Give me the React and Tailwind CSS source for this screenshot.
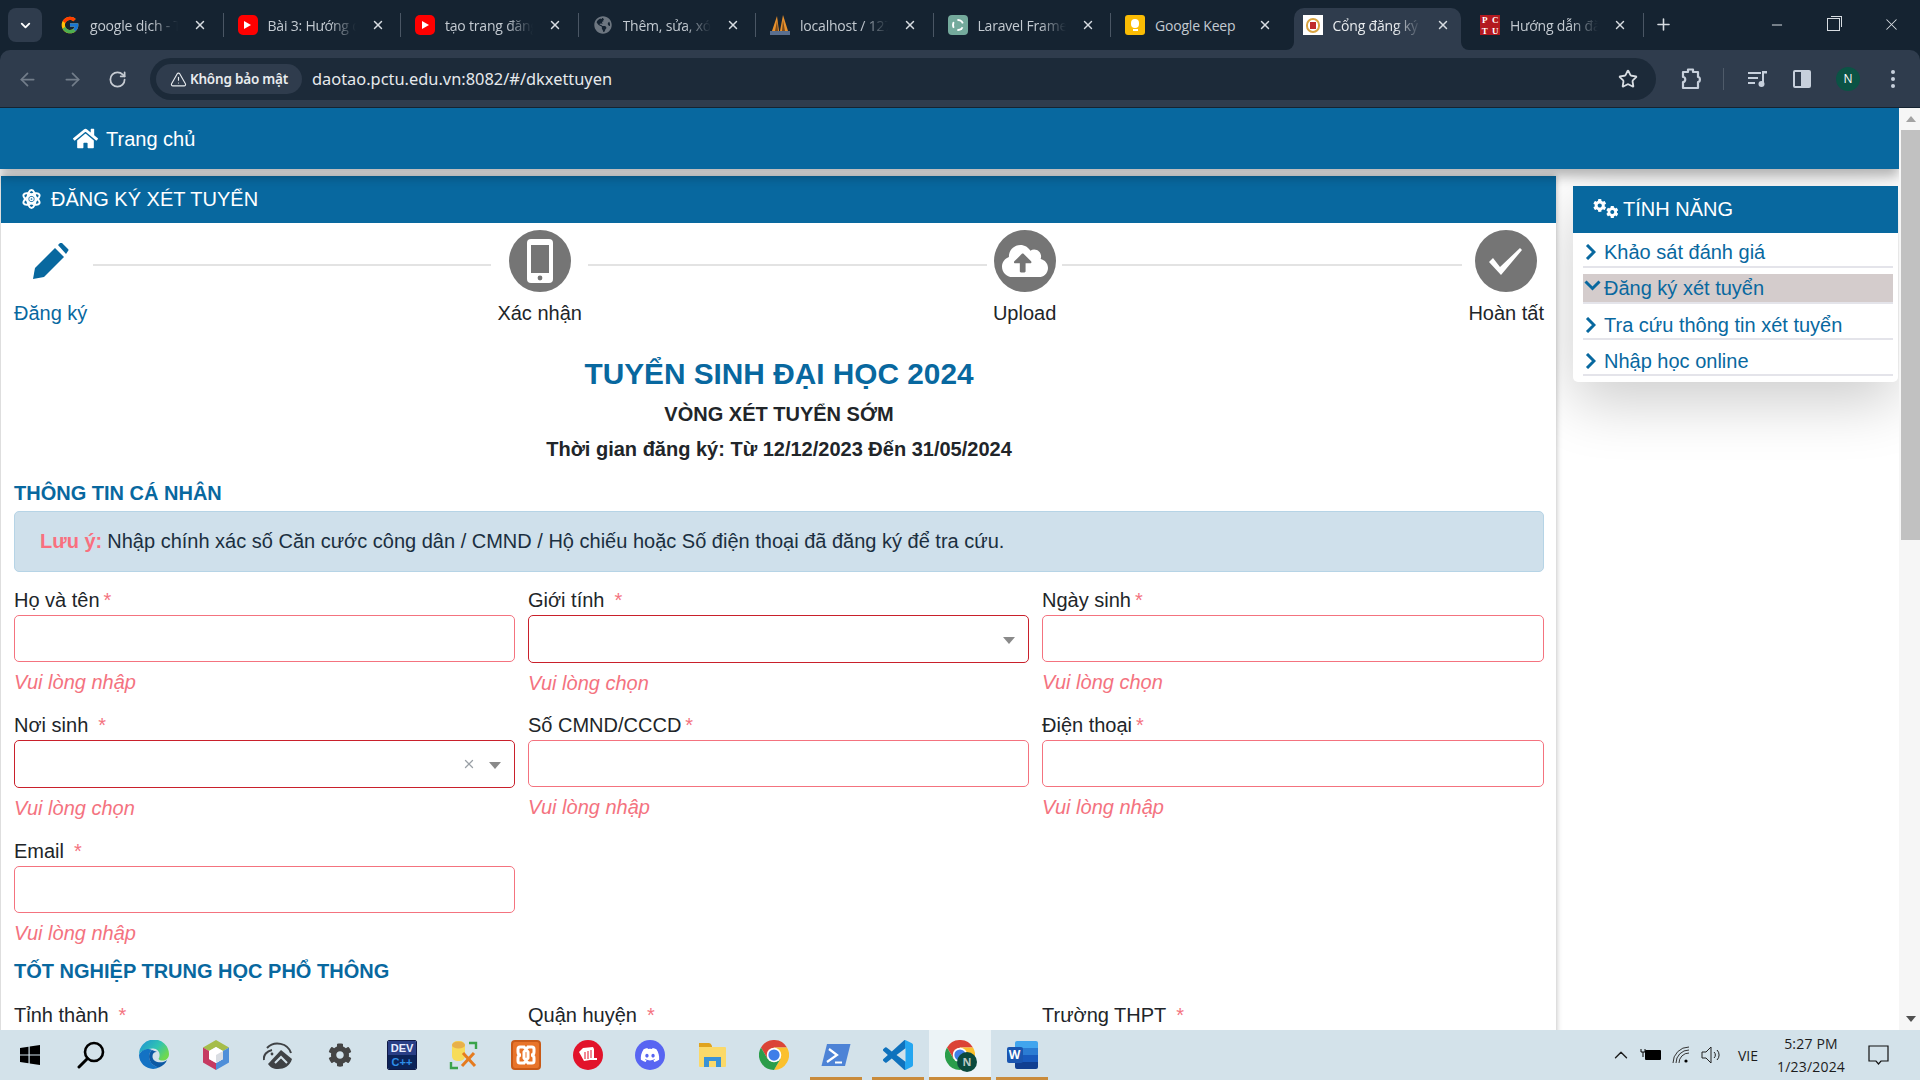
import React from 'react';
import { ChevronDown, ChevronUp, ArrowLeft, ArrowRight, RotateCw, Star, Plus, X, Minus, TriangleAlert } from 'lucide-react';
import { FaHome, FaCog, FaCloudUploadAlt, FaDiscord, FaGlobeAmericas } from 'react-icons/fa';
import { FcGoogle } from 'react-icons/fc';

const ChromeLogo = ({ size = 20 }) => (
  <svg width={size} height={size} viewBox="0 0 24 24">
    <path d="M1.6 6 A12 12 0 0 1 22.4 6 H12 L6.8 15 Z" fill="#db4437" />
    <path d="M22.4 6 A12 12 0 0 1 12 24 L17.2 15 L12 6 Z" fill="#fbc02d" />
    <path d="M12 24 A12 12 0 0 1 1.6 6 L6.8 15 L17.2 15 Z" fill="#2a9d4a" />
    <circle cx="12" cy="12" r="5.8" fill="#fff" />
    <circle cx="12" cy="12" r="4.5" fill="#3f7fe8" />
  </svg>
);

const YoutubeIcon = () => (
  <div className="w-[20px] h-[20px] rounded-[5px] bg-[#f00] flex items-center justify-center">
    <div className="w-0 h-0 border-y-[4px] border-y-transparent border-l-[7px] border-l-white" />
  </div>
);

const PmaIcon = () => (
  <svg width="20" height="22" viewBox="0 0 20 22">
    <path d="M2 17 L7 2 L9 17 Z" fill="#e8912d" />
    <path d="M10 17 L13 1 L18 17 Z" fill="#e8912d" />
    <path d="M5 17 L7 7 L8 17 Z M12 17 L13 6 L15 17 Z" fill="#7a4a1a" />
    <rect x="0" y="17" width="20" height="4" fill="#5a6f8f" />
  </svg>
);

const GptIcon = () => (
  <div className="w-[20px] h-[20px] rounded-[4px] bg-[#74aa9c] flex items-center justify-center">
    <div className="w-[12px] h-[12px] rounded-full border-2 border-dashed border-white" />
  </div>
);

const KeepIcon = () => (
  <div className="w-[20px] h-[20px] rounded-[3px] bg-[#fbbc04] flex flex-col items-center justify-center gap-[1px]">
    <div className="w-[8px] h-[9px] rounded-full bg-white" />
    <div className="w-[5px] h-[2px] bg-white" />
  </div>
);

const SchoolIcon = () => (
  <div className="w-[20px] h-[20px] bg-white flex items-center justify-center">
    <div className="w-[14px] h-[15px] rounded-full border-2 border-[#d9a441] flex items-center justify-center">
      <div className="w-[6px] h-[7px] bg-[#c02a2a]" />
    </div>
  </div>
);

const PctuIcon = () => (
  <div className="w-[20px] h-[20px] bg-[#b3191f] grid grid-cols-2 gap-px text-white text-[9px] leading-[10px] font-bold text-center font-['Liberation_Serif',serif]">
    <span>P</span><span>C</span><span>T</span><span>U</span>
  </div>
);

const tabs = [
  { title: 'google dịch - Tìm', icon: <FcGoogle size={20} /> },
  { title: 'Bài 3: Hướng dẫn', icon: <YoutubeIcon /> },
  { title: 'tạo trang đăng ký', icon: <YoutubeIcon /> },
  { title: 'Thêm, sửa, xóa dữ', icon: <FaGlobeAmericas size={18} className="text-[#6d7680]" /> },
  { title: 'localhost / 127.0', icon: <PmaIcon /> },
  { title: 'Laravel Framework', icon: <GptIcon /> },
  { title: 'Google Keep', icon: <KeepIcon />, noFade: true },
  { title: 'Cổng đăng ký xét', icon: <SchoolIcon />, active: true },
  { title: 'Hướng dẫn đăng', icon: <PctuIcon /> },
];

const Tab = ({ tab, showSep }) => (
  <div className="relative w-[177.5px] h-[42px] shrink-0 flex items-center pb-[8px]">
    {tab.active && (
      <>
        <div className="absolute inset-y-0 left-[5px] right-[5px] bg-[#2f3c4d] rounded-t-[10px]" />
        <div className="absolute bottom-0 left-[-3px] w-[8px] h-[8px] bg-[#2f3c4d]">
          <div className="w-full h-full bg-[#152331] rounded-br-[8px]" />
        </div>
        <div className="absolute bottom-0 right-[-3px] w-[8px] h-[8px] bg-[#2f3c4d]">
          <div className="w-full h-full bg-[#152331] rounded-bl-[8px]" />
        </div>
      </>
    )}
    <div className="relative w-[20px] ml-[14px] flex justify-center shrink-0">{tab.icon}</div>
    <div
      className={`relative ml-[10px] w-[88px] whitespace-nowrap overflow-hidden text-[14px] tracking-[-0.2px] ${
        tab.active ? 'text-[#e8ebee]' : 'text-[#c3cad1]'
      } ${tab.noFade ? '' : '[mask-image:linear-gradient(to_right,black_70%,transparent_100%)]'}`}
    >
      {tab.title}
    </div>
    <X size={14} strokeWidth={2.5} className="relative ml-[15px] text-[#d7dce1] shrink-0" />
    {showSep && <div className="absolute right-0 top-[5px] h-[24px] w-px bg-[#4a5664]" />}
  </div>
);

const ChromeBar = () => (
  <div className="h-[108px] shrink-0 bg-[#152331] font-['Open_Sans',sans-serif]">
    <div className="h-[50px] flex items-end relative">
      <div className="absolute left-[8px] top-[8px] w-[34px] h-[34px] rounded-[8px] bg-[#2f3c4d] flex items-center justify-center">
        <ChevronDown size={15} strokeWidth={3} className="text-white" />
      </div>
      <div className="flex pl-[46px]">
        {tabs.map((t, i) => (
          <Tab key={i} tab={t} showSep={i !== 6 && i !== 7} />
        ))}
      </div>
      <Plus size={19} strokeWidth={2} className="ml-[10px] mb-[16px] text-[#d7dce1]" />
      <div className="ml-auto flex items-center mb-[16px] text-[#d7dce1]">
        <Minus size={16} strokeWidth={1.5} className="mr-[42px]" />
        <div className="relative w-[13px] h-[13px] border border-[#d7dce1] mr-[42px]">
          <div className="absolute -top-[3px] -right-[3px] w-[11px] h-[11px] border-t border-r border-[#d7dce1]" />
        </div>
        <X size={19} strokeWidth={1.3} className="mr-[19px]" />
      </div>
    </div>
    <div className="h-[57px] bg-[#2f3c4d] rounded-t-[10px] flex items-center pl-[5px] pt-px">
      <ArrowLeft size={21} className="w-[45px] text-[#727d8a]" />
      <ArrowRight size={21} className="w-[45px] text-[#727d8a]" />
      <RotateCw size={19} strokeWidth={2.2} className="w-[45px] text-[#c7ccd3]" />
      <div className="ml-[10px] w-[1506px] h-[42px] rounded-full bg-[#1c2a39] flex items-center pl-[6px] pr-[18px]">
        <div className="w-[146px] h-[30px] rounded-full bg-[#2f3c4d] flex items-center justify-center gap-[3px] text-[#e8ebee]">
          <TriangleAlert size={17} strokeWidth={1.6} />
          <span className="text-[13.5px] font-semibold whitespace-nowrap tracking-[-0.2px] font-['Noto_Sans',sans-serif]">Không bảo mật</span>
        </div>
        <span className="ml-[10px] text-[16.4px] text-[#e6e9ec] font-['Noto_Sans',sans-serif]">daotao.pctu.edu.vn:8082/#/dkxettuyen</span>
        <Star size={20} strokeWidth={2.2} className="ml-auto text-[#d7dce1]" />
      </div>
      <svg width="22" height="24" viewBox="0 0 22 24" className="ml-[24px] text-[#c7d0dc]" fill="none" stroke="currentColor" strokeWidth="2.2">
        <path d="M3 5 H8 V2.5 H13 V5 H18 V10 C20.5 10 20.5 15 18 15 V21 H3 V15 C6 15 6 10 3 10 Z" strokeLinejoin="round" />
      </svg>
      <div className="ml-[21px] w-px h-[22px] bg-[#4f5b6a]" />
      <svg width="20" height="18" viewBox="0 0 20 18" className="ml-[24px] text-[#c7d0dc]" fill="currentColor">
        <rect x="0" y="2" width="13" height="2" />
        <rect x="0" y="7" width="10" height="2" />
        <rect x="0" y="12" width="7" height="2" />
        <rect x="14" y="2" width="2" height="12" />
        <rect x="14" y="1" width="5" height="2.5" />
        <circle cx="13.5" cy="14" r="3" />
      </svg>
      <div className="ml-[25px] w-[18px] h-[18px] border-2 border-[#c7d0dc] rounded-[2px] flex justify-end">
        <div className="w-[8px] h-full bg-[#c7d0dc]" />
      </div>
      <div className="ml-[25px] w-[24px] h-[24px] rounded-full bg-[#0b5345] flex items-center justify-center text-[12px] text-white">N</div>
      <div className="ml-[31px] flex flex-col gap-[3px]">
        <div className="w-[4px] h-[4px] rounded-full bg-[#c7d0dc]" />
        <div className="w-[4px] h-[4px] rounded-full bg-[#c7d0dc]" />
        <div className="w-[4px] h-[4px] rounded-full bg-[#c7d0dc]" />
      </div>
    </div>
  </div>
);

const PencilIcon = () => (
  <svg width="36" height="36" viewBox="0 0 36 36" fill="#08689f">
    <path d="M0 36 L2 25 L22 5 L31 14 L11 34 Z" />
    <path d="M25 2 L27 0 Q28 -0.5 29 0 L35 6 Q36 7 35 8 L33 11 Z" />
  </svg>
);

const PhoneIcon = () => (
  <svg width="26" height="44" viewBox="0 0 26 44">
    <rect x="0" y="0" width="26" height="44" rx="4" fill="#fff" />
    <rect x="4" y="6" width="18" height="28" fill="#757575" />
    <circle cx="13" cy="39" r="2.4" fill="#757575" />
  </svg>
);

const CheckIcon = () => (
  <svg width="34" height="27" viewBox="0 0 34 27" fill="#fff">
    <path d="M0 14 L4 10 L11 19 L31 0 L33 2 L12 27 Z" />
  </svg>
);

const AtomIcon = () => (
  <svg width="19" height="20" viewBox="0 0 19 20" fill="none" stroke="#fff" strokeWidth="2">
    <ellipse cx="9.5" cy="10" rx="4" ry="9" />
    <ellipse cx="9.5" cy="10" rx="4" ry="9" transform="rotate(60 9.5 10)" />
    <ellipse cx="9.5" cy="10" rx="4" ry="9" transform="rotate(120 9.5 10)" />
    <circle cx="9.5" cy="10" r="1.6" strokeWidth="1.5" />
  </svg>
);

const StepCircle = ({ children }) => (
  <div className="w-[62px] h-[62px] rounded-full bg-[#757575] flex items-center justify-center">{children}</div>
);

const Step = ({ label, active, children }) => (
  <div className="flex flex-col items-center shrink-0">
    <div className="h-[62px] flex items-center justify-center">{children}</div>
    <div className={`mt-[8px] h-[26px] leading-[26px] text-[20px] whitespace-nowrap ${active ? 'text-[#08689f]' : 'text-[#212529]'}`}>{label}</div>
  </div>
);

const Field = ({ label, star = 'ml-[4px]', kind = 'input', error, labelCls = 'h-[28px]' }) => (
  <div>
    <div className={`${labelCls} leading-[26px] text-[20px] text-[#212529] whitespace-nowrap`}>
      {label}
      <span className={`${star} text-[#f4737f]`}>*</span>
    </div>
    {kind === 'input' ? (
      <div className="h-[47px] rounded-[5px] border border-[#f4737f] bg-white" />
    ) : (
      <div className="h-[48px] rounded-[5px] border-[1.5px] border-[#c9202b] bg-white flex items-center justify-end pr-[13px] gap-[13px]">
        {kind === 'clearable' && <X size={14} strokeWidth={2.2} className="text-[#9aa0a6]" />}
        <div className="w-0 h-0 mt-[2px] border-x-[6px] border-x-transparent border-t-[7px] border-t-[#8a8a8a]" />
      </div>
    )}
    <div className="mt-[7px] h-[26px] leading-[26px] text-[20px] italic text-[#f4737f]">{error}</div>
  </div>
);

const features = [
  { label: 'Khảo sát đánh giá', cls: 'h-[35px] pt-[4px]' },
  { label: 'Đăng ký xét tuyển', open: true, cls: 'h-[30px] mt-[6px] bg-[#d4cccc]' },
  { label: 'Tra cứu thông tin xét tuyển', cls: 'h-[36px] pt-[7px]' },
  { label: 'Nhập học online', cls: 'h-[36px] pt-[7px]' },
];

const Sidebar = () => (
  <div className="ml-[17px] mt-[10px] w-[325px] h-[196px] rounded-b-[5px] bg-white shadow-[0_20px_60px_rgba(0,0,0,0.2)]">
    <div className="h-[47px] bg-[#08689f] flex items-center pl-[20px] pb-[2px] text-white">
      <div className="w-[26px] h-[21px] flex justify-between">
        <FaCog size={15} className="self-start" />
        <FaCog size={14} className="self-end" />
      </div>
      <span className="ml-[4px] text-[20px]">TÍNH NĂNG</span>
    </div>
    <div className="pl-[10px] pr-[5px] text-[#08689f]">
      {features.map((f) => (
        <div key={f.label} className={`flex items-center text-[20px] border-b-2 border-[#e4e4ea] ${f.cls}`}>
          <div className="w-[21px] shrink-0 pl-[1px]">
            {f.open ? (
              <svg width="17" height="11" viewBox="0 0 17 11" fill="none" stroke="#08689f" strokeWidth="3" className="-mt-[5px]">
                <path d="M1.5 1.5 L8.5 8.5 L15.5 1.5" />
              </svg>
            ) : (
              <svg width="11" height="16" viewBox="0 0 11 16" fill="none" stroke="#08689f" strokeWidth="3" className="ml-[1px]">
                <path d="M2 1 L9 8 L2 15" />
              </svg>
            )}
          </div>
          {f.label}
        </div>
      ))}
    </div>
  </div>
);

const SectionTitle = ({ children, className }) => (
  <div className={`text-[20px] font-bold text-[#08689f] whitespace-nowrap ${className}`}>{children}</div>
);

const RegisterCard = () => (
  <div className="relative ml-[1px] w-[1555px] shrink-0 h-[900px] bg-white shadow-[0_0_6px_rgba(0,0,0,0.3)]">
    <div className="h-[47px] bg-[#08689f] flex items-center pl-[21px] pb-[2px] text-white">
      <AtomIcon />
      <span className="ml-[10px] text-[20px]">ĐĂNG KÝ XÉT TUYỂN</span>
    </div>
    <div className="pl-[13px] pr-[12px]">
      <div className="flex gap-[6px] pt-[7px]">
        <Step label="Đăng ký" active><PencilIcon /></Step>
        <div className="w-[398px] shrink-0 h-[2px] mt-[34px] bg-[#e3e3e3]" />
        <Step label="Xác nhận"><StepCircle><PhoneIcon /></StepCircle></Step>
        <div className="w-[399px] shrink-0 h-[2px] mt-[34px] bg-[#e3e3e3]" />
        <Step label="Upload"><StepCircle><FaCloudUploadAlt size={46} className="text-white" /></StepCircle></Step>
        <div className="flex-1 h-[2px] mt-[34px] bg-[#e3e3e3]" />
        <Step label="Hoàn tất"><StepCircle><CheckIcon /></StepCircle></Step>
      </div>
      <div className="text-center mt-[28px]">
        <div className="h-[40px] leading-[40px] text-[29.8px] font-bold text-[#08689f]">TUYỂN SINH ĐẠI HỌC 2024</div>
        <div className="mt-[6px] h-[28px] leading-[28px] text-[20px] font-bold text-[#212529]">VÒNG XÉT TUYỂN SỚM</div>
        <div className="mt-[7px] h-[28px] leading-[28px] text-[20px] font-bold text-[#212529]">Thời gian đăng ký: Từ 12/12/2023 Đến 31/05/2024</div>
      </div>
      <SectionTitle className="mt-[16px] h-[28px] leading-[28px]">THÔNG TIN CÁ NHÂN</SectionTitle>
      <div className="mt-[4px] h-[61px] rounded-[5px] border border-[#b6d4e6] bg-[#cfe0eb] flex items-center pl-[25px] pb-[2px] text-[20px] text-[#1b2f40]">
        <span className="font-bold text-[#f9707f] mr-[5px]">Lưu ý:</span>
        Nhập chính xác số Căn cước công dân / CMND / Hộ chiếu hoặc Số điện thoại đã đăng ký để tra cứu.
      </div>
      <div className="mt-[15px] grid grid-cols-[501px_501px_502px] grid-rows-[125px_126px_125px] gap-x-[13px]">
        <Field label="Họ và tên" error="Vui lòng nhập" />
        <Field label="Giới tính" star="ml-[10px]" kind="select" error="Vui lòng chọn" />
        <Field label="Ngày sinh" error="Vui lòng chọn" />
        <Field label="Nơi sinh" star="ml-[10px]" kind="clearable" error="Vui lòng chọn" />
        <Field label="Số CMND/CCCD" error="Vui lòng nhập" />
        <Field label="Điện thoại" error="Vui lòng nhập" />
        <Field label="Email" star="ml-[10px]" error="Vui lòng nhập" />
      </div>
      <SectionTitle className="-mt-[4px] h-[24px] leading-[24px]">TỐT NGHIỆP TRUNG HỌC PHỔ THÔNG</SectionTitle>
      <div className="mt-[19px] grid grid-cols-[501px_501px_502px] gap-x-[13px]">
        <Field label="Tỉnh thành" star="ml-[10px]" labelCls="h-[29px]" />
        <Field label="Quận huyện" star="ml-[10px]" labelCls="h-[29px]" />
        <Field label="Trường THPT" star="ml-[10px]" labelCls="h-[29px]" />
      </div>
    </div>
  </div>
);

const Scrollbar = () => (
  <div className="w-[21px] shrink-0 bg-[#f6f6f6] flex flex-col items-end">
    <div className="w-[19px] h-[22px] flex items-center justify-center">
      <div className="w-0 h-0 border-x-[5px] border-x-transparent border-b-[6px] border-b-[#a3a3a3]" />
    </div>
    <div className="w-[19px] h-[410px] bg-[#c1c1c1]" />
    <div className="w-[19px] mt-auto h-[22px] flex items-center justify-center">
      <div className="w-0 h-0 border-x-[5px] border-x-transparent border-t-[6px] border-t-[#505050]" />
    </div>
  </div>
);

const WinLogo = () => (
  <svg width="20" height="20" viewBox="0 0 20 20" fill="#000">
    <path d="M0 3 L8.5 1.8 V9.4 H0 Z M9.7 1.6 L20 0 V9.4 H9.7 Z M0 10.6 H8.5 V18.2 L0 17 Z M9.7 10.6 H20 V20 L9.7 18.4 Z" />
  </svg>
);

const SearchLogo = () => (
  <svg width="28" height="28" viewBox="0 0 28 28" fill="none" stroke="#000" strokeWidth="2.6" className="-ml-[3px]">
    <circle cx="17" cy="11" r="9" />
    <path d="M10.5 17.5 L2 26" strokeLinecap="round" strokeWidth="3" />
  </svg>
);

const EdgeLogo = () => (
  <svg width="30" height="30" viewBox="0 0 30 30">
    <defs>
      <linearGradient id="edgeTop" x1="0" y1="0" x2="1" y2="0.6">
        <stop offset="0" stopColor="#1f8ed8" />
        <stop offset="0.6" stopColor="#2fc4b2" />
        <stop offset="1" stopColor="#6fd84f" />
      </linearGradient>
    </defs>
    <path d="M0 15 A15 15 0 0 1 30 14 C30 21 22 22 19.5 19 C22.5 14 19 8 13.5 8.5 C7 9 1.5 11 0 15 Z" fill="url(#edgeTop)" />
    <path d="M0 15 C2 10 9 7.5 13 10 C8 14 9 25 20 27.5 C11 32 0 25 0 15 Z" fill="#1372c4" />
    <path d="M13 10 C8 14 9 25 20 27.5 C24 26 27 23 28 20 C24 24 13 23 13.5 16 C13.6 13 16 11.5 18 12 Z" fill="#0c59a4" />
  </svg>
);

const HexLogo = () => (
  <svg width="26" height="30" viewBox="0 0 26 30">
    <path d="M13 0 L26 7.5 L20 11 L13 7 L6 11 L0 7.5 Z" fill="#a5bd4a" />
    <path d="M26 7.5 V22.5 L13 30 V23 L20 19 V11 Z" fill="#4f8fd9" />
    <path d="M0 7.5 V22.5 L13 30 V23 L6 19 V11 Z" fill="#c63a62" />
    <path d="M13 7 L20 11 V19 L13 23 L6 19 V11 Z" fill="#ffffff" />
    <path d="M13 15 L20 11 V19 L13 23 Z" fill="#d9dde2" />
  </svg>
);

const CameraLogo = () => (
  <svg width="30" height="30" viewBox="0 0 30 30" fill="none">
    <path d="M4 8 A14 13 0 0 1 28 13" stroke="#3f4245" strokeWidth="2" />
    <path d="M5 24 L18 10 L29 19 C27 26 21 29 15 29 C10 29 7 27 5 24 Z" fill="#3f4245" />
    <path d="M12 23 L18 17 L24 23" stroke="#d3e2ea" strokeWidth="2" />
    <path d="M1 20 C0 15 4 11 9 10" stroke="#3f4245" strokeWidth="2" />
    <circle cx="9" cy="14" r="1.4" fill="#3f4245" />
  </svg>
);

const DevLogo = () => (
  <div className="w-[30px] h-[30px] rounded-[2px] overflow-hidden border border-[#101a46] flex flex-col items-center text-[11px] leading-[14px] font-bold font-['Liberation_Sans',sans-serif]">
    <span className="w-full h-[14px] bg-[#2a3f86] text-[#e8edff] text-center">DEV</span>
    <span className="w-full flex-1 bg-[#0b2358] text-[#2f8fe8] text-center">C++</span>
  </div>
);

const ToolsLogo = () => (
  <svg width="30" height="30" viewBox="0 0 30 30" fill="none">
    <path d="M20 3 H27 V9 M2 22 V28 H9" stroke="#3aa34a" strokeWidth="2.4" />
    <rect x="3" y="1" width="13" height="20" rx="5" fill="#f7dc5a" />
    <ellipse cx="9.5" cy="5" rx="6.5" ry="3.6" fill="#e8b04a" />
    <path d="M13 26 L25 13 M14 13 L26 26" stroke="#e57b1f" strokeWidth="3" />
  </svg>
);

const XamppLogo = () => (
  <div className="w-[30px] h-[30px] rounded-[4px] bg-[#e8742a] border-2 border-[#c85a18] flex items-center justify-center">
    <svg width="20" height="22" viewBox="0 0 20 22" fill="none" stroke="#fff" strokeWidth="3">
      <path d="M9 3 H4 Q2 3 2 5 V8 Q2 11 5 11 Q2 11 2 14 V17 Q2 19 4 19 H9 M11 3 H16 Q18 3 18 5 V8 Q18 11 15 11 Q18 11 18 14 V17 Q18 19 16 19 H11 M8 3 L12 8 V14 L8 19 M12 3 L8 8 V14 L12 19" />
    </svg>
  </div>
);

const FistLogo = () => (
  <div className="w-[30px] h-[30px] rounded-full bg-[#e2132b] flex items-center justify-center">
    <svg width="18" height="16" viewBox="0 0 18 16" fill="#fff">
      <path d="M0 5 L4 1 L14 0 L15 2 V11 H18 V13 H11 L5 14 Z" />
      <path d="M6 5 V12 M9 4 V12 M12 3 V11" stroke="#e2132b" strokeWidth="1" />
    </svg>
  </div>
);

const DiscordLogo = () => (
  <div className="w-[30px] h-[30px] rounded-full bg-[#5865f2] flex items-center justify-center">
    <FaDiscord size={20} className="text-white" />
  </div>
);

const FolderLogo = () => (
  <svg width="27" height="24" viewBox="0 0 27 24">
    <path d="M0 0 H10 Q12 0 13 3 V4 H0 Z" fill="#e0a31f" />
    <rect x="0" y="4" width="27" height="20" rx="1" fill="#fbd969" />
    <path d="M5 24 V14 H22 V24 H17 V18 H10 V24 Z" fill="#3b92d6" />
  </svg>
);

const PwshLogo = () => (
  <svg width="30" height="24" viewBox="0 0 30 24">
    <path d="M6 1 H29.5 L24 23 H0.5 Z" fill="#4d83d6" />
    <path d="M8 6 L16 12 L6 19" stroke="#fff" strokeWidth="2.2" fill="none" />
    <path d="M14 19.5 H21" stroke="#fff" strokeWidth="2" />
  </svg>
);

const VscodeLogo = () => (
  <svg width="30" height="30" viewBox="0 0 24 24">
    <defs>
      <linearGradient id="vsBlue" x1="0" y1="0" x2="1" y2="0">
        <stop offset="0.74" stopColor="#0f72bd" />
        <stop offset="0.74" stopColor="#24a6f0" />
      </linearGradient>
    </defs>
    <path fill="url(#vsBlue)" d="M23.15 2.587L18.21.21a1.494 1.494 0 0 0-1.705.29l-9.46 8.63-4.12-3.128a.999.999 0 0 0-1.276.057L.327 7.261A1 1 0 0 0 .326 8.74L3.899 12 .326 15.26a1 1 0 0 0 .001 1.479L1.65 17.94a.999.999 0 0 0 1.276.057l4.12-3.128 9.46 8.63a1.492 1.492 0 0 0 1.704.29l4.942-2.377A1.5 1.5 0 0 0 24 20.06V3.939a1.5 1.5 0 0 0-.85-1.352zm-5.146 14.861L10.826 12l7.178-5.448v10.896z" />
  </svg>
);

const ProfileChrome = () => (
  <div className="relative w-[30px] h-[30px]">
    <ChromeLogo size={30} />
    <div className="absolute -right-[2px] -bottom-[2px] w-[20px] h-[20px] rounded-full bg-[#0b4a3d] text-[#b8c8c2] text-[11px] font-bold flex items-center justify-center">N</div>
  </div>
);

const WordLogo = () => (
  <div className="relative w-[31px] h-[28px]">
    <div className="absolute right-0 top-0 w-[23px] h-[28px] rounded-[2px] overflow-hidden flex flex-col">
      <div className="h-[7px] bg-[#41a5ee]" />
      <div className="h-[7px] bg-[#2b7cd3]" />
      <div className="h-[7px] bg-[#185abd]" />
      <div className="h-[7px] bg-[#103f91]" />
    </div>
    <div className="absolute left-0 top-[6px] w-[16px] h-[16px] rounded-[2px] bg-[#1a56b0] text-white text-[12px] font-bold flex items-center justify-center">W</div>
  </div>
);

const taskbarApps = [
  { icon: <WinLogo /> },
  { icon: <SearchLogo /> },
  { icon: <EdgeLogo /> },
  { icon: <HexLogo /> },
  { icon: <CameraLogo /> },
  { icon: <FaCog size={24} className="text-[#454545]" /> },
  { icon: <DevLogo /> },
  { icon: <ToolsLogo /> },
  { icon: <XamppLogo /> },
  { icon: <FistLogo /> },
  { icon: <DiscordLogo /> },
  { icon: <FolderLogo /> },
  { icon: <ChromeLogo size={30} /> },
  { icon: <PwshLogo />, running: true },
  { icon: <VscodeLogo />, running: true },
  { icon: <ProfileChrome />, running: true, active: true },
  { icon: <WordLogo />, running: true },
];

const Taskbar = () => (
  <div className="h-[50px] shrink-0 bg-[#d3e2ea] flex items-stretch font-['Open_Sans',sans-serif] text-[#1c1c1c]">
    <div className="flex -ml-[1px]">
      {taskbarApps.map((app, i) => (
        <div key={i} className={`relative w-[62px] flex items-center justify-center ${app.active ? 'bg-[#ecf3f6]' : ''}`}>
          {app.icon}
          {app.running && <div className={`absolute bottom-0 h-[3px] bg-[#c98b3b] ${app.active ? 'inset-x-0' : 'inset-x-[5px]'}`} />}
        </div>
      ))}
    </div>
    <div className="ml-auto flex items-center pr-[5px]">
      <ChevronUp size={22} strokeWidth={1.5} />
      <svg width="22" height="14" viewBox="0 0 22 14" className="ml-[8px]">
        <rect x="5" y="2" width="16" height="10" rx="1" fill="#000" />
        <path d="M1 1 V4 H5 V1 M3 4 V9" stroke="#000" fill="none" />
      </svg>
      <svg width="18" height="18" viewBox="0 0 18 18" fill="none" stroke="#333" className="ml-[10px]">
        <path d="M1 17 A16 16 0 0 1 17 1 M4 17 A13 13 0 0 1 17 4 M7 17 A10 10 0 0 1 17 7" />
        <circle cx="14" cy="15" r="1.6" fill="#000" stroke="none" />
      </svg>
      <svg width="22" height="18" viewBox="0 0 22 18" fill="none" stroke="#222" className="ml-[11px]">
        <path d="M1 6 H5 L10 1 V17 L5 12 H1 Z" />
        <path d="M13 6 A4 4 0 0 1 13 12 M16 4 A7 7 0 0 1 16 14" />
      </svg>
      <span className="ml-[15px] text-[14px]">VIE</span>
      <div className="ml-[17px] w-[72px] text-center text-[14px] tracking-[0.2px] leading-[23px] whitespace-nowrap">
        <div>5:27 PM</div>
        <div>1/23/2024</div>
      </div>
      <svg width="22" height="22" viewBox="0 0 22 22" fill="none" stroke="#111" strokeWidth="1.2" className="ml-[21px] mr-[25px]">
        <path d="M1 2 H20 V17 H13 L10.5 20 L8 17 H1 Z" />
      </svg>
    </div>
  </div>
);

export default function App() {
  return (
    <div className="w-[1920px] h-[1080px] flex flex-col overflow-hidden bg-white font-['Liberation_Sans',sans-serif]">
      <ChromeBar />
      <div className="flex-1 min-h-0 flex overflow-hidden">
        <div className="w-[1899px] shrink-0 flex flex-col relative overflow-hidden">
          <div className="relative z-10 h-[61px] shrink-0 bg-[#08689f] flex items-center pl-[73px] text-white shadow-[0_7px_12px_rgba(0,0,0,0.3)]">
            <FaHome size={25} />
            <span className="ml-[8px] text-[20px]">Trang chủ</span>
          </div>
          <div className="flex pt-[7px]">
            <RegisterCard />
            <Sidebar />
          </div>
        </div>
        <Scrollbar />
      </div>
      <Taskbar />
    </div>
  );
}
